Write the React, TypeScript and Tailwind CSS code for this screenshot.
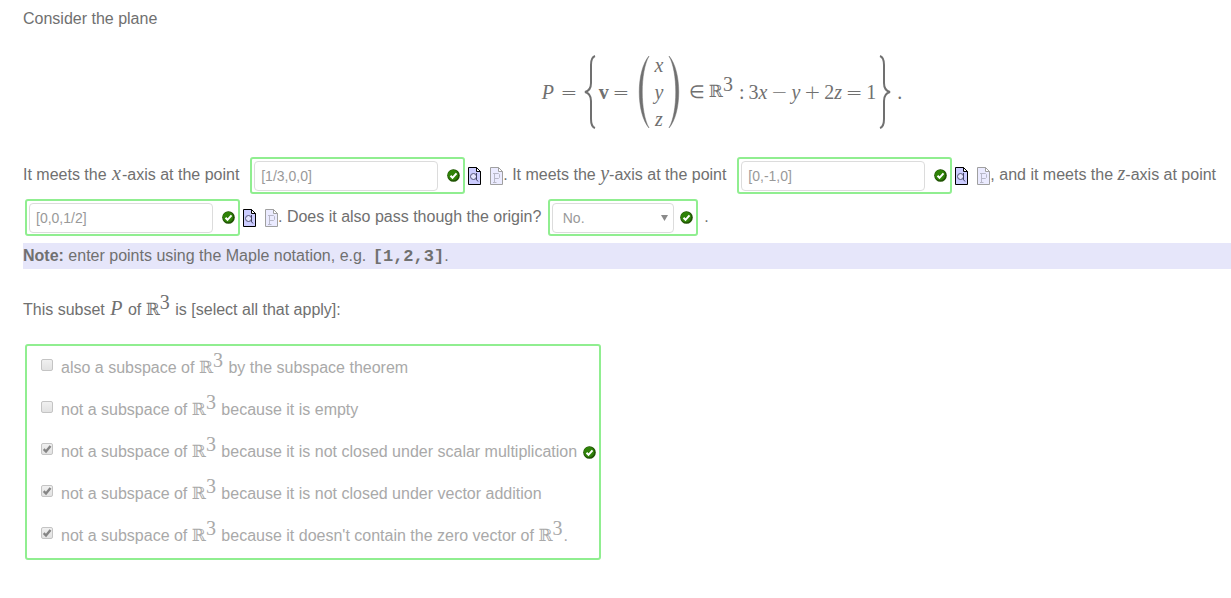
import type { ReactNode } from 'react';

const SERIF = "font-['Liberation_Serif',serif]";

function Var({ children, wide = false }: { children: ReactNode; wide?: boolean }) {
  return <i className={`${SERIF} ${wide ? 'px-px' : ''} text-[20px] leading-none`}>{children}</i>;
}

function R3() {
  return (
    <span className="whitespace-nowrap leading-none">
      <span className="font-['DejaVu_Serif',serif] text-[17px] leading-none">ℝ</span>
      <sup className={`${SERIF} relative -top-[6px] pr-px align-baseline text-[20px] leading-none`}>3</sup>
    </span>
  );
}

function Tick() {
  return (
    <svg viewBox="0 0 13 13" className="h-[13px] w-[13px] shrink-0" role="img" aria-label="Correct">
      <circle cx="6.5" cy="6.5" r="6.3" fill="#1f5203" />
      <circle cx="6" cy="6" r="5.2" fill="#2f8208" />
      <path d="M3.5 6.8 5.5 8.8 9.5 4.3" fill="none" stroke="#fff" strokeWidth="2" />
    </svg>
  );
}

function Page({ fill, line }: { fill: string; line: string }) {
  return (
    <>
      <path d="M.5.5H8.5L12.5 4.5V17.5H.5Z" fill={fill} stroke={line} />
      <path d="M8.5.5V4.5H12.5Z" fill="#fff" stroke={line} />
    </>
  );
}

function FileLinks() {
  return (
    <span className="ml-px inline-flex items-center gap-[9px] align-middle">
      <a href="#preview" aria-label="Preview answer">
        <svg viewBox="0 0 13 18" className="block h-[18px] w-[13px]">
          <Page fill="#ccccff" line="#000" />
          <circle cx="5.5" cy="9.5" r="3" fill="#e4e4ff" stroke="#555577" />
          <path d="M8.5 6V12M8 12 10 14.5" fill="none" stroke="#444466" />
        </svg>
      </a>
      <a href="#plot" aria-label="Plot answer">
        <svg viewBox="0 0 13 18" className="block h-[18px] w-[13px]">
          <Page fill="#ebebff" line="#a0a0a0" />
          <path d="M3 6.5H8.5L9.5 7.5V10.5L8.5 11.5H4.5M4.5 6.5V15.5M3 15.5H6.5" fill="none" stroke="#b8b8c8" />
        </svg>
      </a>
    </span>
  );
}

const FRAME = 'mx-[2px] inline-flex h-[37px] items-center rounded-[3px] border-2 border-[#90ee90] pl-[2px] align-middle';

function Answer({ label, value }: { label: string; value: string }) {
  return (
    <>
      <span className={`${FRAME} gap-[9px] pr-[3px]`}>
        <input
          aria-label={label}
          defaultValue={value}
          disabled
          className="h-[30px] w-[184px] rounded border border-[#dcdcdc] bg-white px-[6px] text-[14px] text-[#999]"
        />
        <Tick />
      </span>
      <FileLinks />
    </>
  );
}

function Op({ children }: { children: ReactNode }) {
  return <span className="w-6 text-center font-['DejaVu_Sans',sans-serif] text-[20px] font-extralight">{children}</span>;
}

function Brace({ right = false }: { right?: boolean }) {
  return (
    <svg viewBox="0 0 12 76" className="h-[76px] w-[12px]" aria-hidden="true">
      <path
        d={
          right
            ? 'M1 2C4 3 5 6 5 11V29C5 34 7 37 11 38C7 39 5 42 5 47V65C5 70 4 73 1 74'
            : 'M11 2C8 3 7 6 7 11V29C7 34 5 37 1 38C5 39 7 42 7 47V65C7 70 8 73 11 74'
        }
        fill="none"
        stroke="currentColor"
        strokeWidth="2"
      />
    </svg>
  );
}

function Paren({ right = false }: { right?: boolean }) {
  return (
    <svg viewBox="0 0 12 76" className="h-[76px] w-[12px]" aria-hidden="true">
      <path
        d={right ? 'M1 2C14 17 14 59 1 74C10 58 10 18 1 2Z' : 'M11 2C-2 17 -2 59 11 74C2 58 2 18 11 2Z'}
        fill="currentColor"
        stroke="currentColor"
        strokeWidth="0.5"
      />
    </svg>
  );
}

function Formula() {
  return (
    <div className={`${SERIF} mt-[23px] flex h-[76px] items-center justify-center pl-[190px] text-[20px] leading-none`}>
      <i className="w-[15px]">P</i>
      <Op>=</Op>
      <span className="ml-[3px] flex"><Brace /></span>
      <b className="ml-[3px]">v</b>
      <Op>=</Op>
      <span className="ml-[5px] flex items-center">
        <Paren />
        <span className="flex w-[18px] flex-col gap-[7px] text-center italic">
          <span>x</span>
          <span>y</span>
          <span>z</span>
        </span>
        <Paren right />
      </span>
      <span className="mr-[2px] ml-[7px] w-[20px] text-center text-[18px]">∈</span>
      <span className="mb-1"><R3 /></span>
      <span className="mr-[4px] ml-[5px]">:</span>
      <span>3<i>x</i></span>
      <Op>−</Op>
      <i>y</i>
      <Op>+</Op>
      <span>2<i>z</i></span>
      <Op>=</Op>
      <span>1</span>
      <span className="ml-[3px] flex"><Brace right /></span>
      <span className="ml-[6px]">.</span>
    </div>
  );
}

const CHOICES: { id: string; checked: boolean; text: ReactNode }[] = [
  { id: 'theorem', checked: false, text: <>also a subspace of <R3 /> by the subspace theorem</> },
  { id: 'empty', checked: false, text: <>not a subspace of <R3 /> because it is empty</> },
  { id: 'scalar', checked: true, text: <>not a subspace of <R3 /> because it is not closed under scalar multiplication</> },
  { id: 'addition', checked: true, text: <>not a subspace of <R3 /> because it is not closed under vector addition</> },
  { id: 'zero', checked: true, text: <>not a subspace of <R3 /> because it doesn't contain the zero vector of <R3 />.</> },
];

export default function App() {
  return (
    <main className="bg-white pt-[7px] pl-[23px] font-['Liberation_Sans',Arial,sans-serif] text-[16px] leading-6 text-[#707070]">
      <p>Consider the plane</p>
      <Formula />
      <p className="mt-6 leading-[42px]">
        It meets the <Var wide>x</Var>-axis at the point&nbsp; <Answer label="x-axis point" value="[1/3,0,0]" />. It meets the{' '}
        <Var>y</Var>-axis at the point&nbsp; <Answer label="y-axis point" value="[0,-1,0]" />, and it meets the{' '}
        <Var>z</Var>-axis at point <Answer label="z-axis point" value="[0,0,1/2]" />. Does it also pass though the origin?{' '}
        <span className={`${FRAME} gap-[6px] pr-[3px]`}>
          <span className="relative flex">
            <select
              aria-label="Passes through the origin"
              disabled
              className="h-[30px] w-[122px] appearance-none rounded border border-[#dcdcdc] bg-white px-[10px] text-[14px] leading-[28px] text-[#999] opacity-100"
            >
              <option>No.</option>
              <option>Yes.</option>
            </select>
            <svg viewBox="0 0 7 6" className="absolute top-3 right-[6px] h-[6px] w-[7px]" aria-hidden="true">
              <path d="M0 0H7L3.5 6Z" fill="#8a8a8a" />
            </svg>
          </span>
          <Tick />
        </span>{' '}
        .
      </p>
      <p className="mt-[5px] bg-[#e6e6fa] leading-[26px]">
        <b>Note:</b> enter points using the Maple notation, e.g.{' '}
        <code className="ml-[2px] font-['Liberation_Mono',monospace] text-[17px] leading-none font-bold">[1,2,3]</code>.
      </p>
      <p className="mt-[29px]">
        This subset <Var wide>P</Var> of <R3 /> is [select all that apply]:
      </p>
      <fieldset
        aria-label="Properties of P"
        className="mt-[22px] ml-[2px] flex w-fit items-center gap-[6px] rounded-[3px] border-2 border-[#90ee90] py-px pr-[3px] pl-[14px] text-[#a9a9a9]"
      >
        <ul>
          {CHOICES.map(({ id, checked, text }) => (
            <li key={id} className="flex h-[42px] items-center gap-2">
              <span className="relative mb-[6px] flex">
                <input
                  id={id}
                  type="checkbox"
                  defaultChecked={checked}
                  disabled
                  className="peer h-3 w-3 appearance-none rounded-[2px] border border-[#c4c4c4] bg-linear-to-b from-[#f0f0f0] to-[#e2e2e2]"
                />
                <svg viewBox="0 0 12 12" className="absolute inset-0 hidden h-3 w-3 peer-checked:block" aria-hidden="true">
                  <path d="M2.7 6.2 5 8.5 9.5 3" fill="none" stroke="#858585" strokeWidth="2.4" />
                </svg>
              </span>
              <label htmlFor={id} className="whitespace-nowrap">{text}</label>
            </li>
          ))}
        </ul>
        <Tick />
      </fieldset>
    </main>
  );
}
